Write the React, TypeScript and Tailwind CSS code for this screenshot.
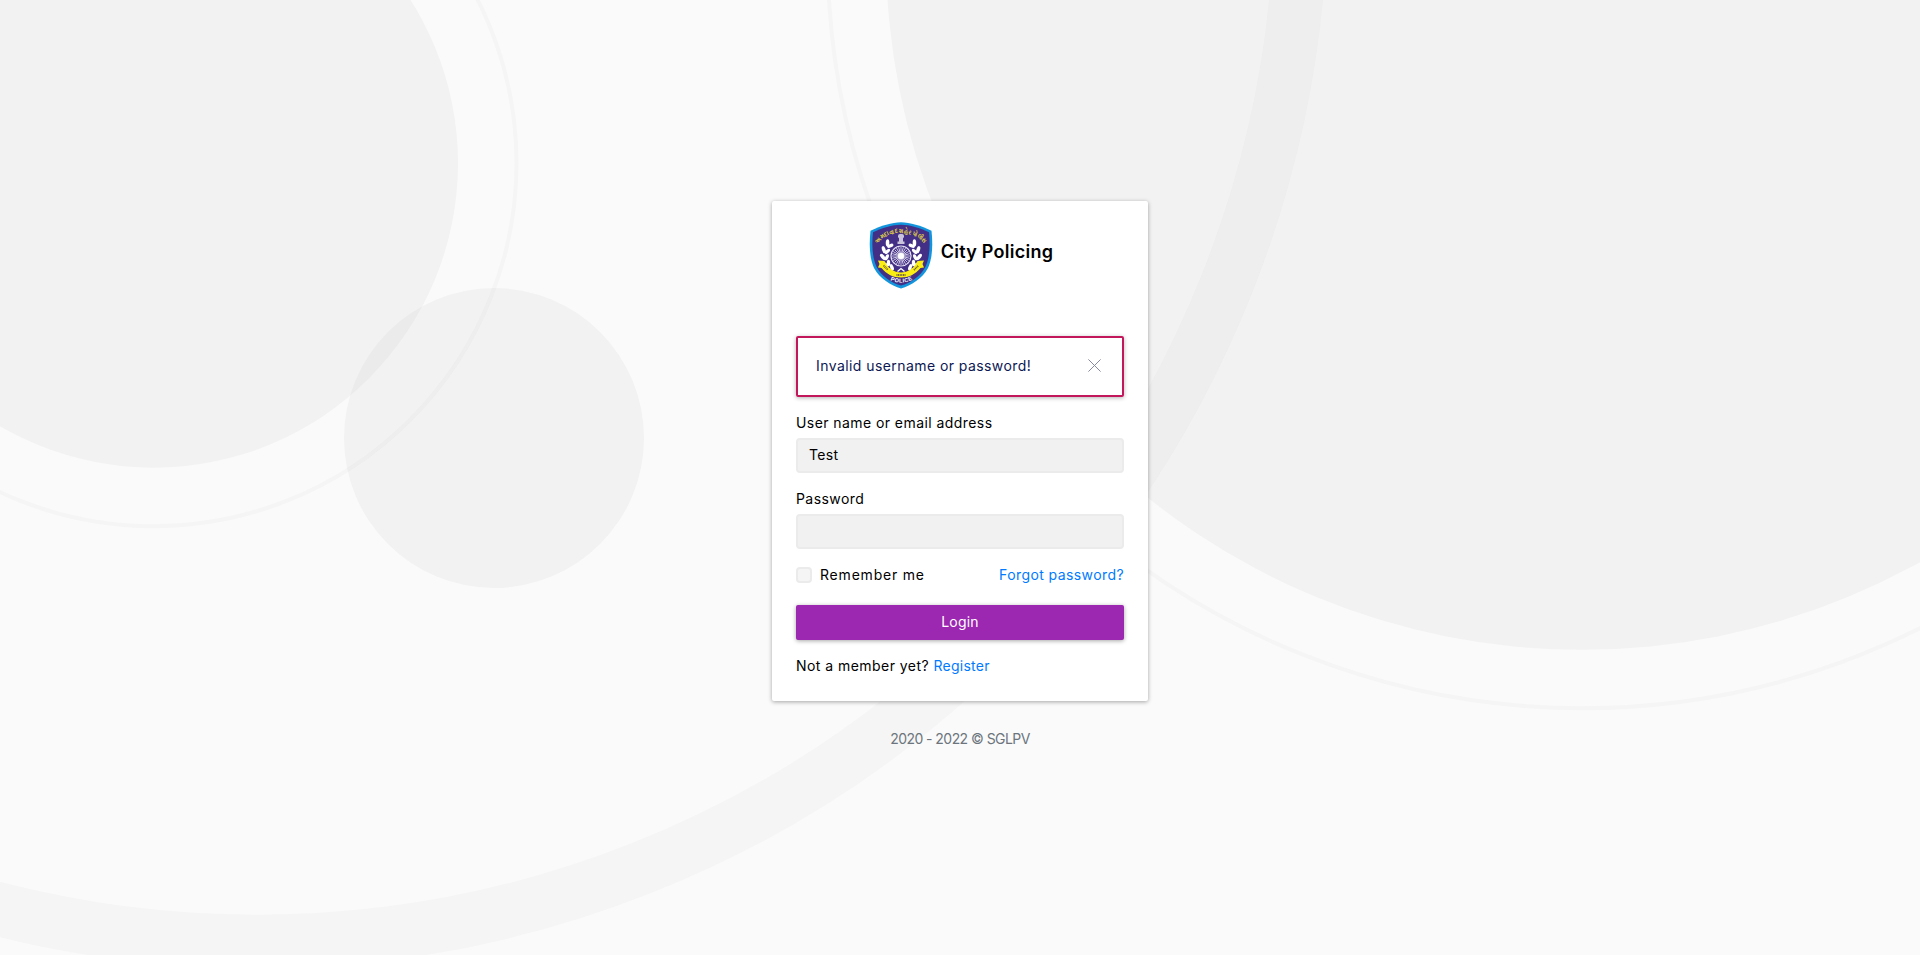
import type { ReactNode } from "react";

function Backdrop() {
  return (
    <svg className="absolute inset-0 h-full w-full" viewBox="0 0 1920 955" fill="none" aria-hidden="true">
      <g fill="#bababa" fillOpacity="0.12">
        <circle cx="153.5" cy="163.2" r="304.5" />
        <circle cx="494" cy="438" r="150" />
        <circle cx="1582" cy="-46.2" r="696" />
      </g>
      <g stroke="#bababa" strokeOpacity="0.075">
        <circle cx="153.5" cy="163.2" r="363" strokeWidth="4" />
        <circle cx="1582" cy="-46.2" r="754.4" strokeWidth="4" />
        <circle cx="257" cy="-102.5" r="1044" strokeWidth="53.6" />
      </g>
    </svg>
  );
}

const spokes = Array.from({ length: 24 }, (_, i) => i * 15);
const leaves = [
  { x: 21, y: 47, a: -70 },
  { x: 17.5, y: 42, a: -45 },
  { x: 16, y: 35.5, a: -20 },
  { x: 17, y: 29, a: 0 },
  { x: 20.5, y: 23, a: 20 },
];

function Laurel() {
  return (
    <g fill="#fff">
      {leaves.map((l) => (
        <g key={l.y} transform={`translate(${l.x} ${l.y}) rotate(${l.a + 10})`}>
          <ellipse cx="-2" cy="-1" rx="1.8" ry="3.7" transform="rotate(-28)" />
          <ellipse cx="2" cy="0" rx="1.7" ry="3.3" transform="rotate(35)" />
        </g>
      ))}
    </g>
  );
}

function PoliceBadge() {
  return (
    <svg className="mt-px h-[68px] w-[64px]" viewBox="0 0 64 68" role="img" aria-label="Police badge">
      <path
        d="M32 1.2C41 1.4 52 4.5 62.5 9.8C64 24 63.500 37 59 47C53.500 57.5 42 64.5 32 67.500C22 64.5 10.500 57.5 5 47C.5 37 0 24 1.500 9.800C12 4.500 23 1.400 32 1.200Z"
        fill="#1295dc"
      />
      <path
        d="M32 3.700C41 3.900 51 6.700 60 11.300C61.400 24 60.700 36.500 56.500 45.800C51.500 55.500 41.500 62 32 64.600C22.500 62 12.500 55.500 7.500 45.800C3.300 36.500 2.600 24 4 11.300C13 6.700 23 3.900 32 3.700Z"
        fill="#432f85"
      />
      <path id="badge-top" d="M9 23C17 8 47 8 56 24" fill="none" />
      <text fill="#e9de3c" fontSize="6.5" fontWeight="600" fontFamily="Noto Sans, sans-serif" textLength="53" lengthAdjust="spacingAndGlyphs">
        <textPath href="#badge-top">અમદાવાદ શહેર પોલીસ</textPath>
      </text>
      <Laurel />
      <g transform="translate(64 0) scale(-1 1)">
        <Laurel />
      </g>
      <g fill="#c9c4dc">
        <rect x="29" y="13" width="6" height="4.500" rx="2" />
        <rect x="30" y="17" width="4" height="4" />
        <rect x="28.500" y="20.500" width="7" height="2.500" />
      </g>
      <circle cx="32" cy="35" r="10" fill="#432f85" stroke="#e6e2f2" strokeWidth="1.200" />
      <g stroke="#e6e2f2" strokeWidth=".8">
        {spokes.map((a) => (
          <path key={a} d="M32 35V26" transform={`rotate(${a} 32 35)`} />
        ))}
      </g>
      <circle cx="32" cy="35" r="3" fill="#fff" />
      <path d="M28.500 50.500L32 47.500L35.500 50.500" fill="none" stroke="#fff" strokeWidth="1.300" />
      <path
        d="M9 39.500L15.500 40C19 47.500 25 51.500 32 51.500C39 51.500 45 47.500 48.500 40L55 39.500L53.500 43L55 46.500L51.500 47C46 53.500 40 56.500 32 56.500C24 56.500 18 53.500 12.500 47L9 46.500L10.500 43Z"
        fill="#fbee12"
      />
      <g fill="none" stroke="#6b5d3c" strokeWidth="1.800" strokeDasharray="1 .6">
        <path d="M14.500 44.500L19 49" />
        <path d="M27.500 54H37" />
        <path d="M45 49L49.500 44.500" />
      </g>
      <path id="badge-bottom" d="M19.500 58.200Q32 65 44.500 58.200" fill="none" />
      <text fill="#fff" fontSize="5.6" fontWeight="700" fontFamily="Liberation Sans, sans-serif" textLength="23">
        <textPath href="#badge-bottom" startOffset="2">POLICE</textPath>
      </text>
    </svg>
  );
}

function Field({ label, type, value }: { label: ReactNode; type: string; value: string }) {
  return (
    <label className="mb-[15px] block">
      <span className="block h-[26px] leading-[21px] tracking-[0.43px]">{label}</span>
      <input
        type={type}
        defaultValue={value}
        className="block h-[35px] w-full rounded-[4px] border-2 border-[#ebebeb] bg-[#f1f1f1] px-[11px] pb-0.5 tracking-[0.3px] outline-none"
      />
    </label>
  );
}

export default function App() {
  return (
    <div className="relative flex h-[955px] w-full flex-col items-center overflow-hidden bg-[#fafafa] pt-[201px] font-[Inter,sans-serif] text-[14px] text-black">
      <Backdrop />
      <main className="relative h-[500px] w-[376px] rounded-[2px] bg-white px-6 pt-[19px] shadow-[0_1px_4px_rgba(0,0,0,0.35)]">
        <div className="flex h-[116px] items-start justify-center pl-[2px]">
          <PoliceBadge />
          <h1 className="mt-[18px] ml-2 text-[18px] leading-[27px] font-semibold tracking-[0.25px]">City Policing</h1>
        </div>
        <div className="mb-[15px] flex h-[61px] items-center justify-between rounded-[2px] border-2 border-[#c2185b] pr-[21px] pl-[18px] shadow-[0_1px_4px_rgba(0,0,0,0.3)]">
          <span className="pb-0.5 tracking-[0.43px] text-[#0c1853]">Invalid username or password!</span>
          <button type="button" aria-label="Close" className="block pb-0.5">
            <svg className="block h-[13px] w-[13px]" viewBox="0 0 13 13" fill="none" stroke="#8589a6">
              <path d="M.4.4L12.600 12.600M12.600.4L.4 12.600" />
            </svg>
          </button>
        </div>
        <Field label="User name or email address" type="text" value="Test" />
        <Field label="Password" type="password" value="" />
        <div className="flex h-[21px] items-center justify-between">
          <label className="flex items-center gap-2">
            <input type="checkbox" className="h-4 w-4 appearance-none rounded-[4px] border-2 border-[#ebebeb] bg-[#f5f5f5]" />
            <span className="tracking-[0.8px]">Remember me</span>
          </label>
          <a href="#forgot" className="tracking-[0.41px] text-[#007bff]">Forgot password?</a>
        </div>
        <button type="button" className="mt-[20px] block h-[35px] w-full rounded-[2px] bg-[#9c27b0] pb-0.5 tracking-[0.2px] text-white shadow-[0_1px_4px_rgba(0,0,0,0.35)]">
          Login
        </button>
        <p className="mt-[15px] leading-[21px] tracking-[0.45px]">
          Not a member yet? <a href="#register" className="tracking-[0.25px] text-[#007bff]">Register</a>
        </p>
      </main>
      <footer className="relative mt-[27px] leading-[21px] tracking-[-0.55px] text-[#6c757d]">2020 - 2022 © SGLPV</footer>
    </div>
  );
}
